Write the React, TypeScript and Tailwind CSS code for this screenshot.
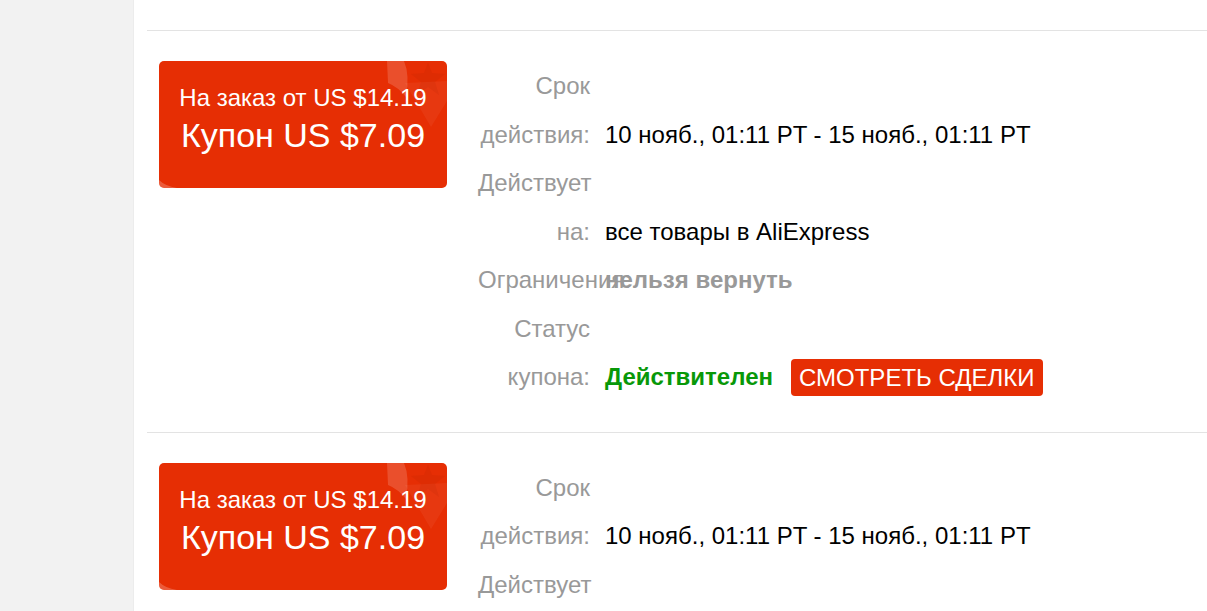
import React from 'react';

type Row = { label: React.ReactNode; value: React.ReactNode };

const coupons = [0, 1];

function CouponCard() {
  return (
    <div className="relative w-[288px] h-[127px] shrink-0 rounded-[5px] bg-[#e62e04] overflow-hidden text-white text-center pt-[23px]">
      {/* corner decoration */}
      <svg className="absolute right-0 top-0" width="62" height="70" viewBox="0 0 62 70">
        <path d="M20 22 L62 20 L62 40 L46 66 Z" fill="#ffffff" fillOpacity="0.05" />
        <path d="M2 0 H19 Q25 14 21 36 Q13 26 3 22 Z" fill="#ffffff" fillOpacity="0.16" />
        <path d="M43 2 L47 12 L60 13 L50 21 L54 34 L43 26 L32 34 L36 21 L26 13 L39 12 Z" fill="#a81e00" fillOpacity="0.12" />
      </svg>
      <svg className="absolute left-0 bottom-0" width="20" height="8" viewBox="0 0 20 8">
        <path d="M0 0 Q6 6 18 8 L0 8 Z" fill="#ffffff" fillOpacity="0.22" />
      </svg>
      <div className="relative text-[24px] leading-[28px]">На заказ от US $14.19</div>
      <div className="relative mt-[3px] text-[34px] leading-[40px]">Купон US $7.09</div>
    </div>
  );
}

function CouponInfo() {
  const rows: Row[] = [
    {
      label: 'Срок действия:',
      value: <span className="text-black">10 нояб., 01:11 PT - 15 нояб., 01:11 PT</span>,
    },
    {
      label: 'Действует на:',
      value: <span className="text-black">все товары в AliExpress</span>,
    },
    {
      label: 'Ограничения:',
      value: <span className="font-bold text-[#999999]">нельзя вернуть</span>,
    },
    {
      label: 'Статус купона:',
      value: (
        <div className="flex items-center">
          <span className="font-bold text-[#089808]">Действителен</span>
          <button className="ml-[18px] h-[37px] px-[8px] rounded-[4px] bg-[#e62e04] text-white leading-[37px] uppercase">
            Смотреть сделки
          </button>
        </div>
      ),
    },
  ];

  return (
    <div className="ml-[31px] mt-[1px] text-[24px] leading-[48.5px]">
      {rows.map((r, i) => (
        <div key={i} className="flex items-end">
          <div className="w-[112px] shrink-0 text-right text-[#999999]">{r.label}</div>
          <div className="ml-[15px] h-[48.5px] flex items-center whitespace-nowrap">{r.value}</div>
        </div>
      ))}
    </div>
  );
}

export default function App() {
  return (
    <div className="min-h-screen flex bg-white font-['Liberation_Sans',Arial,sans-serif]">
      <aside className="w-[134px] shrink-0 bg-[#f2f2f2] border-r border-[#ececec]" />
      <main className="flex-1 ml-[13px]">
        <div className="h-[30px]" />
        {coupons.map((c) => (
          <section key={c} className="border-t border-[#e3e3e3] pt-[30px] pb-[30px] pl-[12px] flex">
            <CouponCard />
            <CouponInfo />
          </section>
        ))}
      </main>
    </div>
  );
}
